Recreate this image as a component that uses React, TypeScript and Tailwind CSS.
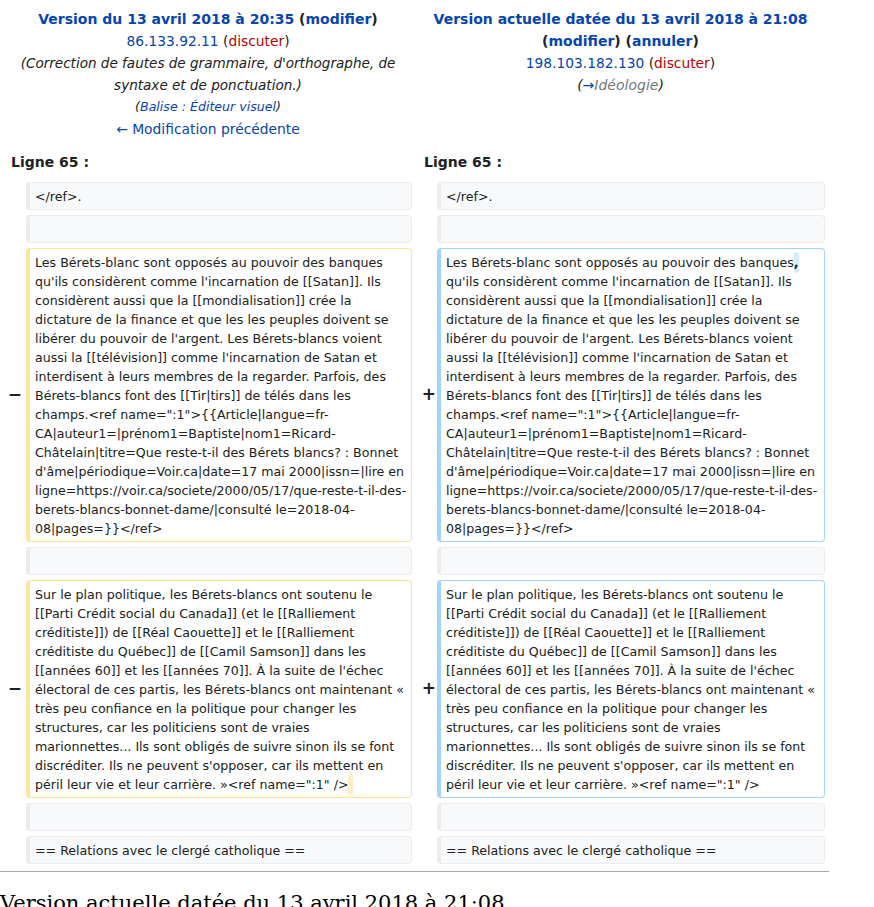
import type { ReactNode } from "react";

type Kind = "context" | "del" | "add";

const cellStyles: Record<Kind, string> = {
  context: "bg-[#f8f9fa] border-[#eaecf0]",
  del: "bg-white border-[#ffe49c]",
  add: "bg-white border-[#a3d3ff]",
};

// the right column is 2px wider, so it gets 2px more padding to wrap like the left one
function Cell({ kind, right, children }: { kind: Kind; right?: boolean; children?: ReactNode }) {
  return (
    <div
      className={`min-h-[28px] rounded-[4px] border border-l-4 pl-[5px] pt-[4px] pb-[3px] text-[12.62px] leading-[19px] break-words text-[#202122] ${right ? "pr-[5px]" : "pr-[3px]"} ${cellStyles[kind]}`}
    >
      {children}
    </div>
  );
}

function Marker({ sign, right }: { sign?: string; right?: boolean }) {
  return (
    <div
      className={`flex items-center justify-end text-[17px] font-bold text-[#202122] ${right ? "pr-[1px]" : "pr-[4px]"}`}
    >
      {sign}
    </div>
  );
}

function Context({ text }: { text: string }) {
  return (
    <>
      <Marker />
      <Cell kind="context">{text}</Cell>
      <Marker right />
      <Cell kind="context" right>
        {text}
      </Cell>
    </>
  );
}

const block1 =
  "qu'ils considèrent comme l'incarnation de [[Satan]]. Ils considèrent aussi que la [[mondialisation]] crée la dictature de la finance et que les les peuples doivent se libérer du pouvoir de l'argent. Les Bérets-blancs voient aussi la [[télévision]] comme l'incarnation de Satan et interdisent à leurs membres de la regarder. Parfois, des Bérets-blancs font des [[Tir|tirs]] de télés dans les champs.<ref name=\":1\">{{Article|langue=fr-CA|auteur1=|prénom1=Baptiste|nom1=Ricard-Châtelain|titre=Que reste-t-il des Bérets blancs? : Bonnet d'âme|périodique=Voir.ca|date=17 mai 2000|issn=|lire en ligne=https://voir.ca/societe/2000/05/17/que-reste-t-il-des-berets-blancs-bonnet-dame/|consulté le=2018-04-08|pages=}}</ref>";

const block2 =
  "Sur le plan politique, les Bérets-blancs ont soutenu le [[Parti Crédit social du Canada]] (et le [[Ralliement créditiste]]) de [[Réal Caouette]] et le [[Ralliement créditiste du Québec]] de [[Camil Samson]] dans les [[années 60]] et les [[années 70]]. À la suite de l'échec électoral de ces partis, les Bérets-blancs ont maintenant « très peu confiance en la politique pour changer les structures, car les politiciens sont de vraies marionnettes... Ils sont obligés de suivre sinon ils se font discréditer. Ils ne peuvent s'opposer, car ils mettent en péril leur vie et leur carrière. »<ref name=\":1\" />";

const link = "text-[#0645ad]";
const red = "text-[#ba0000]";

export default function App() {
  return (
    <div className="min-h-screen bg-white font-['DejaVu_Sans',sans-serif] text-[#202122]">
      <div className="grid w-[829px] grid-cols-[26px_386px_25px_388px] gap-y-[5px]">
        {/* revision headers */}
        <div className="col-span-2 pl-[4px] pt-[8px] text-center text-[14px] leading-[22px]">
          <div className="font-bold">
            <span className={link}>Version du 13 avril 2018 à 20:35</span> (<span className={link}>modifier</span>)
          </div>
          <div className="text-[13.8px]">
            <span className={link}>86.133.92.11</span> (<span className={red}>discuter</span>)
          </div>
          <div className="text-[13.56px] italic">
            (Correction de fautes de grammaire, d'orthographe, de syntaxe et de ponctuation.)
          </div>
          <div className="text-[12.6px] italic">
            (<span className={link}>Balise : Éditeur visuel</span>)
          </div>
          <div className="text-[13.85px]">
            <span className={link}>← Modification précédente</span>
          </div>
        </div>
        <div className="col-span-2 pl-[4px] pt-[8px] text-center text-[14px] leading-[22px]">
          <div className="font-bold">
            <span className={link}>Version actuelle datée du 13 avril 2018 à 21:08</span>{" "}
            (<span className={link}>modifier</span>) (<span className={link}>annuler</span>)
          </div>
          <div className="text-[13.8px]">
            <span className={link}>198.103.182.130</span> (<span className={red}>discuter</span>)
          </div>
          <div className="italic">
            (<span className={link}>→</span>
            <span className="text-[#72777d]">Idéologie</span>)
          </div>
        </div>

        {/* line numbers */}
        <div className="col-span-2 mt-[6px] mb-[4px] pl-[11px] text-[14px] font-bold leading-[22px]">Ligne 65 :</div>
        <div className="col-span-2 mt-[6px] mb-[4px] pl-[12px] text-[14px] font-bold leading-[22px]">Ligne 65 :</div>

        <Context text="</ref>." />
        <Context text="" />

        <Marker sign="−" />
        <Cell kind="del">Les Bérets-blanc sont opposés au pouvoir des banques {block1}</Cell>
        <Marker sign="+" right />
        <Cell kind="add" right>
          Les Bérets-blanc sont opposés au pouvoir des banques
          <span className="rounded-[4px] bg-[#d8ecff] py-[3px] font-bold">,</span> {block1}
        </Cell>

        <Context text="" />

        <Marker sign="−" />
        <Cell kind="del">
          {block2}
          <span className="whitespace-pre rounded-[4px] bg-[#feeec8] py-[3px] font-bold"> </span>
        </Cell>
        <Marker sign="+" right />
        <Cell kind="add" right>
          {block2}
        </Cell>

        <Context text="" />
        <Context text="== Relations avec le clergé catholique ==" />
      </div>

      <hr className="mt-[7px] w-[829px] border-t border-[#a2a9b1]" />
      <h2 className="mt-[17px] font-['DejaVu_Serif',serif] text-[21px] leading-[28px] text-black">
        Version actuelle datée du 13 avril 2018 à 21:08
      </h2>
    </div>
  );
}
